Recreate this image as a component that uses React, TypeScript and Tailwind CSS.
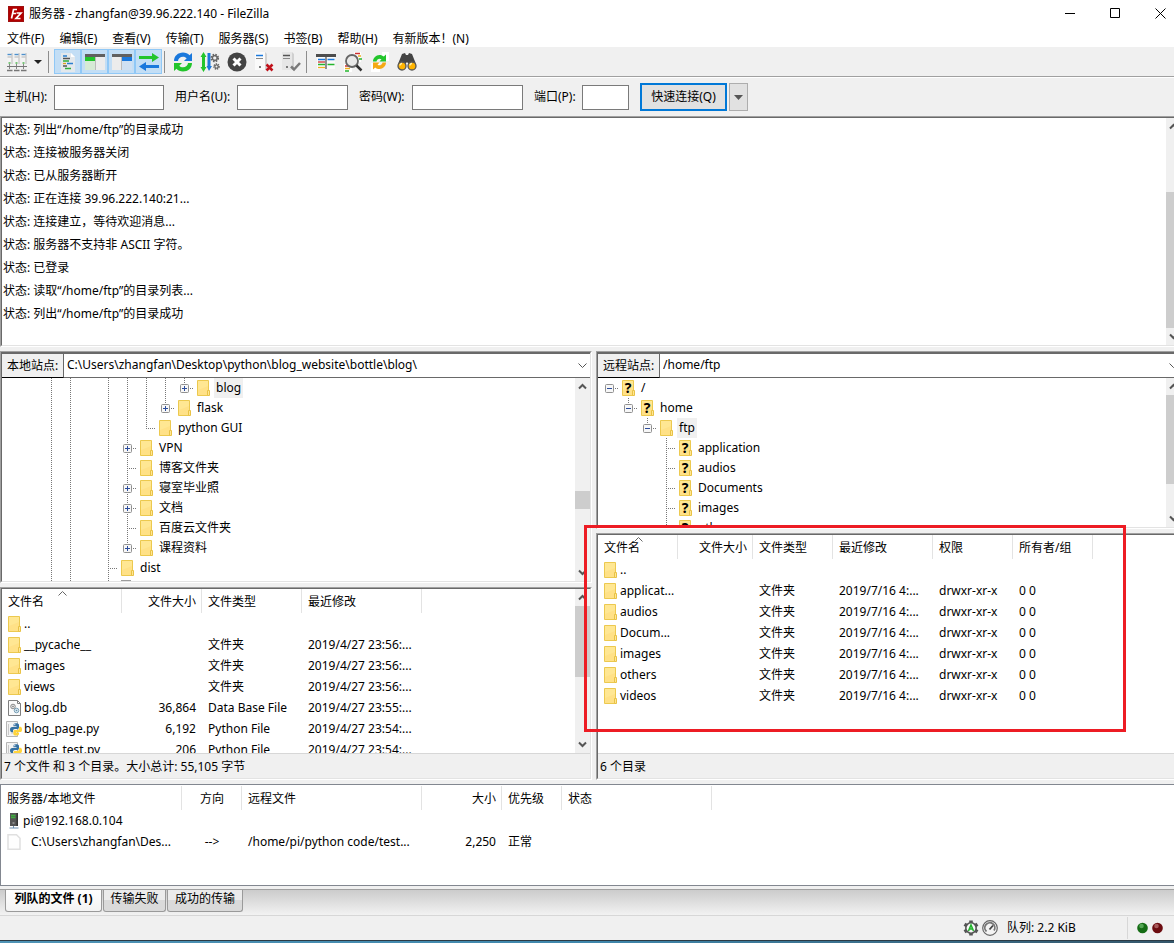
import { ReactNode } from "react";
import clsx from "clsx";

type Column = { label: string; width: string; align?: string };

const menus = ["文件(F)", "编辑(E)", "查看(V)", "传输(T)", "服务器(S)", "书签(B)", "帮助(H)", "有新版本！(N)"];

const logLines = [
  "列出“/home/ftp”的目录成功",
  "连接被服务器关闭",
  "已从服务器断开",
  "正在连接 39.96.222.140:21...",
  "连接建立，等待欢迎消息...",
  "服务器不支持非 ASCII 字符。",
  "已登录",
  "读取“/home/ftp”的目录列表...",
  "列出“/home/ftp”的目录成功",
];

// guides: | line, T branch, + expander, ^ last expander, - open expander, = open root, L last branch
const localTree = [
  { guides: "|| ||||^", name: "blog", icon: "folder", selected: true },
  { guides: "|| |||^", name: "flask", icon: "folder" },
  { guides: "|| ||L", name: "python GUI", icon: "folder" },
  { guides: "|| |+", name: "VPN", icon: "folder" },
  { guides: "|| |T", name: "博客文件夹", icon: "folder" },
  { guides: "|| |+", name: "寝室毕业照", icon: "folder" },
  { guides: "|| |+", name: "文档", icon: "folder" },
  { guides: "|| |T", name: "百度云文件夹", icon: "folder" },
  { guides: "|| |^", name: "课程资料", icon: "folder" },
  { guides: "|| T", name: "dist", icon: "folder" },
  { guides: "|| T", name: "", icon: "drive" },
];

const remoteTree = [
  { guides: "=", name: "/", icon: "unknown" },
  { guides: " -", name: "home", icon: "unknown" },
  { guides: "  -", name: "ftp", icon: "folder", selected: true },
  { guides: "   T", name: "application", icon: "unknown" },
  { guides: "   T", name: "audios", icon: "unknown" },
  { guides: "   T", name: "Documents", icon: "unknown" },
  { guides: "   T", name: "images", icon: "unknown" },
  { guides: "   T", name: "others", icon: "unknown" },
];

const localColumns: Column[] = [
  { label: "文件名", width: "w-[120px]" },
  { label: "文件大小", width: "w-[80px]", align: "text-right" },
  { label: "文件类型", width: "w-[100px]" },
  { label: "最近修改", width: "w-[120px]" },
];

const localFiles = [
  { icon: "folder", cells: ["..", "", "", ""] },
  { icon: "folder", cells: ["__pycache__", "", "文件夹", "2019/4/27 23:56:..."] },
  { icon: "folder", cells: ["images", "", "文件夹", "2019/4/27 23:56:..."] },
  { icon: "folder", cells: ["views", "", "文件夹", "2019/4/27 23:56:..."] },
  { icon: "db", cells: ["blog.db", "36,864", "Data Base File", "2019/4/27 23:55:..."] },
  { icon: "python", cells: ["blog_page.py", "6,192", "Python File", "2019/4/27 23:54:..."] },
  { icon: "python", cells: ["bottle_test.py", "206", "Python File", "2019/4/27 23:54:..."] },
];

const remoteColumns: Column[] = [
  { label: "文件名", width: "w-[80px]" },
  { label: "文件大小", width: "w-[75px]", align: "text-right" },
  { label: "文件类型", width: "w-[80px]" },
  { label: "最近修改", width: "w-[100px]" },
  { label: "权限", width: "w-[80px]" },
  { label: "所有者/组", width: "w-[80px]" },
];

const remoteFiles = [
  { icon: "folder", cells: ["..", "", "", "", "", ""] },
  ...["applicat...", "audios", "Docum...", "images", "others", "videos"].map((name) => ({
    icon: "folder",
    cells: [name, "", "文件夹", "2019/7/16 4:...", "drwxr-xr-x", "0 0"],
  })),
];

const queueColumns: Column[] = [
  { label: "服务器/本地文件", width: "w-[181px]" },
  { label: "方向", width: "w-[60px]", align: "text-center" },
  { label: "远程文件", width: "w-[180px]" },
  { label: "大小", width: "w-[80px]", align: "text-right" },
  { label: "优先级", width: "w-[60px]" },
  { label: "状态", width: "w-[150px]" },
];

const queueFiles = [
  { icon: "server", cells: ["pi@192.168.0.104", "", "", "", "", ""] },
  { icon: "page", cells: ["C:\\Users\\zhangfan\\Des...", "-->", "/home/pi/python code/test...", "2,250", "正常", ""] },
];

function FileIcon({ kind }: { kind: string }) {
  if (kind === "db")
    return (
      <svg width="16" height="16" viewBox="0 0 16 16" className="shrink-0">
        <path d="M.5 .5h9l3 3v12h-12z" fill="#fafafa" stroke="#7f7f7f" />
        <path d="M9.500 .5v3h3" fill="none" stroke="#7f7f7f" />
        <circle cx="5" cy="6.500" r="2.300" fill="#e4e4e4" stroke="#8a8a8a" />
        <circle cx="5" cy="6.500" r=".8" fill="#777" />
        <circle cx="8.500" cy="10.500" r="2.300" fill="#d4e7f2" stroke="#7ba0b5" />
        <circle cx="8.500" cy="10.500" r=".8" fill="#6b90a5" />
      </svg>
    );
  if (kind === "python")
    return (
      <svg width="16" height="16" viewBox="0 0 16 16" className="-ml-[2px] mr-[2px] shrink-0 overflow-visible">
        <path d="M.5 .5h11v15h-11z" fill="#f3f3f3" stroke="#b5b5b5" />
        <path d="M2.500 3v11M5 12h3" stroke="#c9c9c9" />
        <path d="M10 2.200c-2 0-2.500.8-2.500 1.800v1.200h3v.7H6.200C4.800 5.900 4 7 4 8.600s.8 2.600 2 2.600h1V9.700c0-1 .8-1.800 1.800-1.800h2.700c.9 0 1.500-.7 1.500-1.500V4c0-1.200-1-1.800-3-1.800z" fill="#3571a3" />
        <path d="M10.400 14.600c2 0 2.600-.8 2.600-1.800v-1.200h-3v-.6h4.200c1.400 0 1.800-1.300 1.800-2.600s-.6-2.600-1.800-2.600H13v1.500c0 1-.8 1.800-1.800 1.800H8.900c-.9 0-1.500.7-1.500 1.500V13c0 1 1 1.600 3 1.600z" fill="#ffd43b" />
        <circle cx="8.800" cy="3.700" r=".6" fill="#fff" />
      </svg>
    );
  if (kind === "server")
    return (
      <svg width="16" height="16" viewBox="0 0 16 16" className="shrink-0">
        <path d="M3 0h8v13H3z" fill="#555" />
        <path d="M9.500 0H11v13H9.500z" fill="#333" />
        <path d="M4 2.500h4.500M4 4.500h4.500" stroke="#3fae3f" strokeWidth="1.400" />
        <path d="M6.500 13v2M2.500 15h9" stroke="#6d8fb0" />
        <path d="M5.500 9h2v2h-2z" fill="#8a8a8a" />
      </svg>
    );
  if (kind === "page")
    return (
      <svg width="16" height="16" viewBox="0 0 16 16" className="shrink-0">
        <path d="M1 .8h8.500l3.500 3.500v11H1z" fill="#fefefe" stroke="#e0e0e0" strokeWidth="1.500" />
      </svg>
    );
  if (kind === "drive")
    return (
      <svg width="13" height="16" viewBox="0 0 13 16" className="shrink-0">
        <path d="M0 0h10v16H0z" fill="#9c9c9c" />
      </svg>
    );
  return (
    <span className="relative block h-4 w-[13px] shrink-0">
      <svg width="13" height="16" viewBox="0 0 13 16">
        <path d="M.5 .5h11v15H.5z" fill="#ffe793" stroke="#ecc94f" />
        <path d="M1 10l10-4v9H1z" fill="#ffe187" />
        <path d="M10.500 10.500h2v5h-2z" fill="#ffe793" stroke="#e9c246" />
      </svg>
      {kind === "unknown" && (
        <span className="absolute inset-0 pr-px text-center text-[14px] leading-4 font-bold">?</span>
      )}
    </span>
  );
}

function Guide({ kind }: { kind: string }) {
  const boxed = "+^-=".includes(kind);
  const up = kind !== " " && kind !== "=";
  const down = "|T+".includes(kind);
  const dots = { stroke: "#777", strokeDasharray: "1 1", fill: "none" };
  return (
    <svg width="19" height="20" viewBox="0 0 19 20" className="shrink-0">
      {up && <path d="M9.500 0v10" {...dots} />}
      {down && <path d="M9.500 10v10" {...dots} />}
      {kind !== " " && kind !== "|" && <path d="M9 10.500h10" {...dots} />}
      {boxed && (
        <>
          <rect x="5.500" y="6.500" width="8" height="8" rx="1" fill="#f7f7f7" stroke="#919191" />
          <path d="M7 10.500h5" stroke="#2b4c9b" />
          {"+^".includes(kind) && <path d="M9.500 8v5" stroke="#2b4c9b" />}
        </>
      )}
    </svg>
  );
}

function Tree({ rows }: { rows: typeof localTree | typeof remoteTree }) {
  return (
    <ul>
      {rows.map((row) => (
        <li key={row.name} className="flex h-5 items-center">
          {row.guides.split("").map((kind, i) => (
            <Guide key={i} kind={kind} />
          ))}
          <span className="ml-[3px] flex items-center gap-1">
            <FileIcon kind={row.icon} />
            <span className={clsx("px-[2px] leading-5", row.selected && "bg-[#f0f0f0]")}>{row.name}</span>
          </span>
        </li>
      ))}
    </ul>
  );
}

function FileTable({
  label,
  columns,
  rows,
  sorted,
}: {
  label: string;
  columns: Column[];
  rows: typeof localFiles;
  sorted?: boolean;
}) {
  return (
    <table aria-label={label} className="w-0 table-fixed border-separate border-spacing-0">
      <thead>
        <tr className="h-6">
          {columns.map((col) => (
            <th
              key={col.label}
              className={clsx("relative border-r border-[#e3e3e3] pt-px pr-[5px] pb-0 pl-[6px] font-normal", col.width, col.align ?? "text-left")}
            >
              {col.label}
              {sorted && col === columns[0] && (
                <svg width="9" height="5" viewBox="0 0 9 5" className="absolute top-[2px] left-1/2 -ml-1">
                  <path d="M.5 4.500l4-4 4 4" fill="none" stroke="#666" />
                </svg>
              )}
            </th>
          ))}
        </tr>
      </thead>
      <tbody>
        {rows.map((row) => (
          <tr key={row.cells[0]} className="h-[21px]">
            {row.cells.map((cell, i) => (
              <td key={i} className={clsx("px-[6px] py-0", columns[i].align)}>
                {i === 0 ? (
                  <span className="flex items-center">
                    <span className="w-4 shrink-0">
                      <FileIcon kind={row.icon} />
                    </span>
                    <span className={clsx(row.icon === "page" && "pl-2")}>{cell}</span>
                  </span>
                ) : (
                  cell
                )}
              </td>
            ))}
          </tr>
        ))}
      </tbody>
    </table>
  );
}

function Arrow({ down }: { down?: boolean }) {
  return (
    <svg width="15" height="17" viewBox="0 0 15 17" className="shrink-0">
      <path d={down ? "M4 6.500l3.500 3.500 3.500-3.500" : "M4 10.500l3.500-3.500 3.500 3.500"} fill="none" stroke="#555" strokeWidth="2" />
    </svg>
  );
}

function Scrollbar({ before, thumb, after }: { before: number; thumb: number; after: number }) {
  return (
    <div className="flex w-[15px] shrink-0 flex-col bg-[#f0f0f0]">
      <Arrow />
      <div style={{ flexGrow: before }} />
      <div className="bg-[#cdcdcd]" style={{ flexGrow: thumb }} />
      <div style={{ flexGrow: after }} />
      <Arrow down />
    </div>
  );
}

function Sunken({ className, children }: { className?: string; children: ReactNode }) {
  return (
    <div className={clsx("flex min-h-0 flex-col border border-t-[#a0a0a0] border-r-white border-b-white border-l-[#a0a0a0]", className)}>
      <div className="flex min-h-0 flex-1 flex-col border border-t-[#696969] border-r-[#e3e3e3] border-b-[#e3e3e3] border-l-[#696969] bg-white">
        {children}
      </div>
    </div>
  );
}

function AddressBar({ id, label, path }: { id: string; label: string; path: string }) {
  return (
    <div className="flex h-[25px] shrink-0 border-t border-[#696969]">
      <label htmlFor={id} className="flex w-[62px] shrink-0 items-center border-r border-b border-r-[#696969] border-b-black bg-[#f0f0f0] pl-[5px]">
        {label}
      </label>
      <div className="relative flex-1 border-b border-[#696969]">
        <select id={id} className="h-full w-full appearance-none bg-white pb-px pl-[3px]">
          <option>{path}</option>
        </select>
        <svg width="9" height="6" viewBox="0 0 9 6" className="pointer-events-none absolute top-[9px] right-[3px]">
          <path d="M.5 .5l4 4 4-4" fill="none" stroke="#555" />
        </svg>
      </div>
    </div>
  );
}

function StatusLine({ children }: { children: ReactNode }) {
  return <div className="flex h-[25px] shrink-0 items-center border-t border-[#d7d7d7] bg-[#f0f0f0] pt-[2px] pl-[2px]">{children}</div>;
}

function ToolButton({ label, active, children }: { label: string; active?: boolean; children: ReactNode }) {
  return (
    <button
      aria-label={label}
      className={clsx("flex h-[25px] w-[27px] items-center justify-center", active && "border border-[#90c8f6] bg-[#c3def5]")}
    >
      <svg width="20" height="20" viewBox="0 0 20 20" className="shrink-0">
        {children}
      </svg>
    </button>
  );
}

function Separator() {
  return <div className="h-[22px] w-px bg-[#8d8d8d]" />;
}

function Toolbar() {
  return (
    <div className="flex h-[30px] shrink-0 items-center border-b border-[#a0a0a0] pl-[3px]">
      <ToolButton label="站点管理器">
        {[0.5, 7.5, 14.5].map((x) => (
          <g key={x}>
            <path d={`M${x} 1h4v11h-4z`} fill="#f4f4f4" />
            <path d={`M${x + 4} 1h1v11h-1z`} fill="#b9b9b9" />
            <path d={`M${x} 2.500h4`} stroke="#4d8fcb" strokeWidth="1.400" />
            <path d={`M${x} 5h4`} stroke="#b3b3b3" />
            <path d={`M${x + 2} 12v5`} stroke="#888" />
            <path d={`M${x + 1} 11h2`} stroke="#51b551" strokeWidth="1.500" />
            <path d={`M${x - 0.5} 18.500h5.500`} stroke="#777" strokeWidth="1.500" />
          </g>
        ))}
        <path d="M0 14.500h20" stroke="#777" />
      </ToolButton>
      <button aria-label="打开站点列表" className="flex h-[25px] w-[15px] items-center justify-center">
        <svg width="8" height="4" viewBox="0 0 8 4">
          <path d="M0 0h8L4 4z" fill="#222" />
        </svg>
      </button>
      <span className="pr-[5px] pl-[3px]">
        <Separator />
      </span>
      <ToolButton label="消息日志" active>
        <path d="M3 1h10l4 4v15H3z" fill="#e3e8ec" />
        <path d="M13 1l4 4h-4z" fill="#fff" />
        <path d="M5 4h4M9 11.500h6" stroke="#2a7fd0" strokeWidth="1.500" />
        <path d="M5 6.500h7M5 14h4" stroke="#555" strokeWidth="1.300" />
        <path d="M5 9h6M7 16.500h6" stroke="#2fae3c" strokeWidth="1.500" />
        <path d="M5 11.500h3" stroke="#e0a020" strokeWidth="1.300" />
      </ToolButton>
      <ToolButton label="本地目录树" active>
        <path d="M0 2h20v16H0z" fill="#ececec" />
        <path d="M0 2h20v3H0z" fill="#606060" />
        <path d="M0 5h10v4H0z" fill="#22c42c" />
        <path d="M0 9h10v9H0z" fill="#d6ead5" />
        <path d="M10.500 5v13" stroke="#bbb" />
      </ToolButton>
      <ToolButton label="远程目录树" active>
        <path d="M0 2h20v16H0z" fill="#ececec" />
        <path d="M0 2h20v3H0z" fill="#606060" />
        <path d="M10 5h10v4H10z" fill="#1a78dc" />
        <path d="M10 9h10v9H10z" fill="#cfe0f2" />
        <path d="M9.500 5v13" stroke="#bbb" />
      </ToolButton>
      <ToolButton label="传输队列" active>
        <path d="M0 4h13V1l7 4.500-7 4.500V7H0z" fill="#23c52c" />
        <path d="M20 13H7v-3l-7 4.500L7 19v-3h13z" fill="#1a78dc" />
      </ToolButton>
      <span className="pr-1 pl-[2px]">
        <Separator />
      </span>
      <ToolButton label="刷新">
        <path d="M1 9C1 4 5 .5 10 .5c2.600 0 5 1 6.500 2.700L19 1v8h-8l2.700-2.700C12.800 5.300 11.500 4.700 10 4.700 7.200 4.700 5.200 6.500 5 9z" fill="#1a78dc" />
        <path d="M19 11c0 5-4 8.500-9 8.500-2.600 0-5-1-6.500-2.700L1 19v-8h8l-2.700 2.700c.9 1 2.200 1.600 3.700 1.600 2.800 0 4.800-1.800 5-4.300z" fill="#23c52c" />
      </ToolButton>
      <ToolButton label="处理队列">
        <path d="M3.500 0l3 5H5v10h1.500l-3 5-3-5H2V5H.5z" fill="#23c52c" />
        <path d="M7.500 1h3v13h1.500L9 19l-2.500-5h1z" fill="#1a78dc" />
        <circle cx="14.800" cy="6" r="3" fill="none" stroke="#666" strokeWidth="2.600" strokeDasharray="1.400 .96" />
        <circle cx="14.800" cy="6" r="2.400" fill="none" stroke="#666" strokeWidth="1.200" />
        <circle cx="16.500" cy="14.500" r="2.200" fill="none" stroke="#666" strokeWidth="2.200" strokeDasharray="1.100 .63" />
        <circle cx="16.500" cy="14.500" r="1.700" fill="none" stroke="#666" />
      </ToolButton>
      <ToolButton label="取消当前操作">
        <circle cx="10" cy="10" r="9.500" fill="#444" />
        <path d="M6.500 6.500l7 7M13.500 6.500l-7 7" stroke="#fff" strokeWidth="3" />
      </ToolButton>
      <ToolButton label="断开连接">
        <path d="M1 0h10v18H1z" fill="#fafafa" />
        <path d="M11 0l2 2v16h-2z" fill="#d2d2d2" />
        <path d="M2 3.500h7" stroke="#1a78dc" strokeWidth="1.500" />
        <path d="M2 6.500h7" stroke="#888" />
        <path d="M5 15h2" stroke="#555" strokeWidth="1.500" />
        <path d="M12.500 12.500l6 6M18.500 12.500l-6 6" stroke="#c1121c" strokeWidth="2.500" />
      </ToolButton>
      <ToolButton label="重新连接">
        <path d="M1 0h10v18H1z" fill="#e6e6e6" />
        <path d="M11 0l2 2v16h-2z" fill="#d0d0d0" />
        <path d="M2 3.500h7" stroke="#555" strokeWidth="1.500" />
        <path d="M2 6.500h7" stroke="#888" />
        <path d="M5 15h2" stroke="#555" strokeWidth="1.500" />
        <path d="M10 14.500l3 3 6-6.500" fill="none" stroke="#7a7a7a" strokeWidth="2.500" />
      </ToolButton>
      <span className="pr-[5px] pl-[2px]">
        <Separator />
      </span>
      <ToolButton label="目录过滤">
        <path d="M1 5h18v12H1z" fill="#fafafa" />
        <path d="M0 2h20v3H0z" fill="#4d4d4d" />
        <path d="M10 5v12" stroke="#555" strokeWidth="1.300" />
        <path d="M2 7.500h7M11.500 7.500h7" stroke="#1a78dc" strokeWidth="1.300" />
        <path d="M2 10h7" stroke="#d03030" strokeWidth="1.300" />
        <path d="M2 12.500h7M11.500 12.500h7" stroke="#25b52e" strokeWidth="1.300" />
        <path d="M2 15.500h7" stroke="#f0b020" strokeWidth="1.300" />
      </ToolButton>
      <ToolButton label="目录比较">
        <path d="M11 0h7v10h-7zM1 12h8v8H1z" fill="#fff" />
        <path d="M12 1.500h5M2 14h5" stroke="#d03030" strokeWidth="1.300" />
        <path d="M15 4h3M2 16.500h5" stroke="#f0b020" strokeWidth="1.300" />
        <path d="M16 7h3M2 19h4" stroke="#25b52e" strokeWidth="1.300" />
        <circle cx="9" cy="9" r="6" fill="#e9e9e9" stroke="#666" strokeWidth="1.800" />
        <path d="M13.500 13.500l5 5" stroke="#333" strokeWidth="2.500" />
      </ToolButton>
      <ToolButton label="同步浏览">
        <path d="M12 0h7v9h-7zM1 11h9v9H1z" fill="#fff" />
        <path d="M3 9.500C3 6 6 3 9.500 3c1.700 0 3.200.6 4.300 1.600L16 2.500v7H9.500l2-2.200C9.500 5.800 6.800 7 6.500 9.500z" fill="#23c52c" />
        <path d="M16 10.500c0 3.500-3 6.500-6.500 6.500-1.700 0-3.200-.6-4.300-1.600L3 17.500v-7h6.500l-2 2.200c2 1.500 4.700.3 5-2.200z" fill="#f5a914" />
      </ToolButton>
      <ToolButton label="文件搜索">
        <path d="M5 2l3-1 1 2h2l1-2 3 1 4 10-5 3-4-5-4 5-5-3z" fill="#444" />
        <circle cx="5" cy="14" r="4" fill="#ffb400" stroke="#555" strokeWidth="1.300" />
        <circle cx="15" cy="14" r="4" fill="#ffb400" stroke="#555" strokeWidth="1.300" />
        <path d="M3 13.500a2 2 0 012-2M13 13.500a2 2 0 012-2" fill="none" stroke="#fff0b0" strokeWidth="1.300" />
      </ToolButton>
    </div>
  );
}

function Field({ id, label, labelWidth, inputWidth }: { id: string; label: string; labelWidth: string; inputWidth: string }) {
  return (
    <div className="flex items-center">
      <label htmlFor={id} className={labelWidth}>
        {label}
      </label>
      <input id={id} className={clsx("h-[25px] border border-[#7a7a7a] bg-white px-1", inputWidth)} />
    </div>
  );
}

export default function App() {
  return (
    <div className="h-screen overflow-hidden bg-[#f0f0f0] font-['Noto_Sans','Noto_Sans_CJK_SC',sans-serif] text-[12px] leading-4 whitespace-nowrap text-black">
      {/* the window reaches a little past the right edge of the screen */}
      <div className="-mr-[9px] flex h-full flex-col">
        <header className="flex h-[27px] shrink-0 items-center bg-white pl-2">
          <svg width="16" height="16" viewBox="0 0 16 16">
            <path d="M0 0h16v16H0z" fill="#b30000" />
            <path d="M.5 .5h15v15H.5z" fill="none" stroke="#8a2020" strokeDasharray="1 1" />
            <path d="M3.500 12.500l2-9H9M4.500 7.500H8M8.500 7h4.500l-5 5.500h4.500" fill="none" stroke="#fff" strokeWidth="1.700" />
          </svg>
          <h1 className="flex-1 pl-[5px]">服务器 - zhangfan@39.96.222.140 - FileZilla</h1>
          <button aria-label="最小化" className="flex h-[27px] w-[45px] items-center justify-center">
            <svg width="11" height="11" viewBox="0 0 11 11">
              <path d="M0 5.500h10" stroke="#000" />
            </svg>
          </button>
          <button aria-label="最大化" className="flex h-[27px] w-[45px] items-center justify-center">
            <svg width="11" height="11" viewBox="0 0 11 11">
              <path d="M.5 .5h9v9h-9z" fill="none" stroke="#000" />
            </svg>
          </button>
          <button aria-label="关闭" className="flex h-[27px] w-[45px] items-center justify-center">
            <svg width="11" height="11" viewBox="0 0 11 11">
              <path d="M.5 .5l10 10M10.500 .5l-10 10" stroke="#000" />
            </svg>
          </button>
        </header>

        <nav className="flex h-5 shrink-0 items-end gap-[15px] bg-white pl-[7px]">
          {menus.map((menu) => (
            <button key={menu}>{menu}</button>
          ))}
        </nav>

        <Toolbar />

        <form className="flex h-[39px] shrink-0 items-center gap-[11px] border-t border-white pl-1" onSubmit={(e) => e.preventDefault()}>
          <Field id="host" label="主机(H):" labelWidth="w-[50px]" inputWidth="w-[110px]" />
          <Field id="user" label="用户名(U):" labelWidth="w-[62px]" inputWidth="w-[111px]" />
          <Field id="password" label="密码(W):" labelWidth="w-[53px]" inputWidth="w-[111px]" />
          <Field id="port" label="端口(P):" labelWidth="w-[48px]" inputWidth="w-[47px]" />
          <div className="flex gap-[2px]">
            <button className="h-7 w-[87px] border-2 border-[#0078d7] bg-[#e1e1e1]">快速连接(Q)</button>
            <button aria-label="快速连接历史" className="flex h-7 w-[19px] items-center justify-center border border-[#adadad] bg-[#e1e1e1]">
              <svg width="9" height="5" viewBox="0 0 9 5">
                <path d="M0 0h9L4.500 5z" fill="#555" />
              </svg>
            </button>
          </div>
        </form>

        <Sunken className="h-[231px] shrink-0">
          <div className="flex min-h-0 flex-1">
            <ul className="flex-1 pl-px">
              {logLines.map((line, i) => (
                <li key={i} className="leading-[23px]">
                  状态: {line}
                </li>
              ))}
            </ul>
            <Scrollbar before={57} thumb={136} after={0} />
          </div>
        </Sunken>

        <main className="grid min-h-0 flex-1 grid-cols-[592fr_587fr] gap-1 pt-1">
          <section className="flex min-h-0 min-w-0 flex-col gap-1">
            <Sunken className="h-[232px] shrink-0">
              <AddressBar id="local-path" label="本地站点:" path={"C:\\Users\\zhangfan\\Desktop\\python\\blog_website\\bottle\\blog\\"} />
              <div className="flex min-h-0 flex-1">
                <div className="flex-1 overflow-hidden pl-10">
                  <Tree rows={localTree} />
                </div>
                <Scrollbar before={96} thumb={18} after={55} />
              </div>
            </Sunken>
            <Sunken className="flex-1">
              <div className="flex min-h-0 flex-1">
                <div className="flex-1 overflow-hidden">
                  <FileTable label="本地文件" columns={localColumns} rows={localFiles} sorted />
                </div>
                <Scrollbar before={0} thumb={71} after={59} />
              </div>
              <StatusLine>7 个文件 和 3 个目录。大小总计: 55,105 字节</StatusLine>
            </Sunken>
          </section>

          <section className="flex min-h-0 min-w-0 flex-col gap-1">
            <Sunken className="h-[178px] shrink-0">
              <AddressBar id="remote-path" label="远程站点:" path="/home/ftp" />
              <div className="flex min-h-0 flex-1">
                <div className="flex-1 overflow-hidden pl-[2px]">
                  <Tree rows={remoteTree} />
                </div>
                <Scrollbar before={0} thumb={89} after={26} />
              </div>
            </Sunken>
            <Sunken className="relative flex-1">
              <div className="min-h-0 flex-1 overflow-hidden">
                <FileTable label="远程文件" columns={remoteColumns} rows={remoteFiles} sorted />
              </div>
              <StatusLine>6 个目录</StatusLine>
              <div className="pointer-events-none absolute -top-[9px] -left-[13px] h-[207px] w-[542px] border-3 border-[#ed1c24]" />
            </Sunken>
          </section>
        </main>

        <div className="mt-1 h-[102px] shrink-0 border border-[#828790] bg-white pt-px">
          <FileTable label="传输队列" columns={queueColumns} rows={queueFiles} />
        </div>

        <div role="tablist" className="mt-[3px] flex h-[27px] shrink-0 items-start gap-px border-t border-b border-t-[#a0a0a0] border-b-[#d7d7d7] bg-linear-to-b from-[#cccccc] to-[#f2f2f2] pl-[5px]">
          <button role="tab" aria-selected="true" className="h-[22px] w-[97px] rounded-b-[3px] border border-t-0 border-[#9a9a9a] bg-linear-to-b from-white to-[#f3f3f3] pb-[3px] font-bold">
            列队的文件 (1)
          </button>
          <button role="tab" aria-selected="false" className="h-[22px] w-[63px] rounded-b-[3px] border border-t-0 border-[#9a9a9a] bg-linear-to-b from-[#ebebeb] from-50% to-[#dadada] to-50% pb-[3px]">
            传输失败
          </button>
          <button role="tab" aria-selected="false" className="h-[22px] w-[76px] rounded-b-[3px] border border-t-0 border-[#9a9a9a] bg-linear-to-b from-[#ebebeb] from-50% to-[#dadada] to-50% pb-[3px]">
            成功的传输
          </button>
        </div>

        <footer className="flex h-6 shrink-0 items-center justify-end pr-5">
          <svg width="16" height="16" viewBox="0 0 16 16">
            {[0, 60, 120].map((angle) => (
              <path key={angle} d="M8 .5v15" stroke="#555" strokeWidth="3.600" transform={`rotate(${angle} 8 8)`} />
            ))}
            <circle cx="8" cy="8" r="5.200" fill="#f7f7f7" stroke="#555" strokeWidth="1.600" />
            <path d="M5.500 11L8 5l2.500 6M6.500 9h3" fill="none" stroke="#22b52c" strokeWidth="1.600" />
          </svg>
          <svg width="16" height="16" viewBox="0 0 16 16" className="ml-[3px]">
            <circle cx="8" cy="8" r="7.300" fill="#f4f4f4" stroke="#666" strokeWidth="1.200" />
            <path d="M4.500 11.500a5 5 0 117.500-1" fill="none" stroke="#777" strokeWidth="1.800" />
            <path d="M7.500 9.500L11 5.500" stroke="#444" strokeWidth="1.800" />
          </svg>
          <span className="w-[129px] pl-[9px]">队列: 2.2 KiB</span>
          <span className="h-[22px] w-px bg-[#d7d7d7]" />
          <svg width="26" height="12" viewBox="0 0 26 12" className="ml-[9px]">
            <circle cx="5.500" cy="6" r="5.300" fill="#156c15" />
            <circle cx="4.500" cy="4" r="2.300" fill="#6fbf6f" opacity=".7" />
            <circle cx="20.500" cy="6" r="5.300" fill="#6c0c10" />
            <circle cx="19.500" cy="4" r="2.300" fill="#c07a7a" opacity=".7" />
          </svg>
        </footer>
        <div className="h-[3px] shrink-0 border-t border-[#2b3a44] bg-linear-to-r from-[#4f93b5] via-[#3f87ac] to-[#34566a]" />
      </div>
    </div>
  );
}
